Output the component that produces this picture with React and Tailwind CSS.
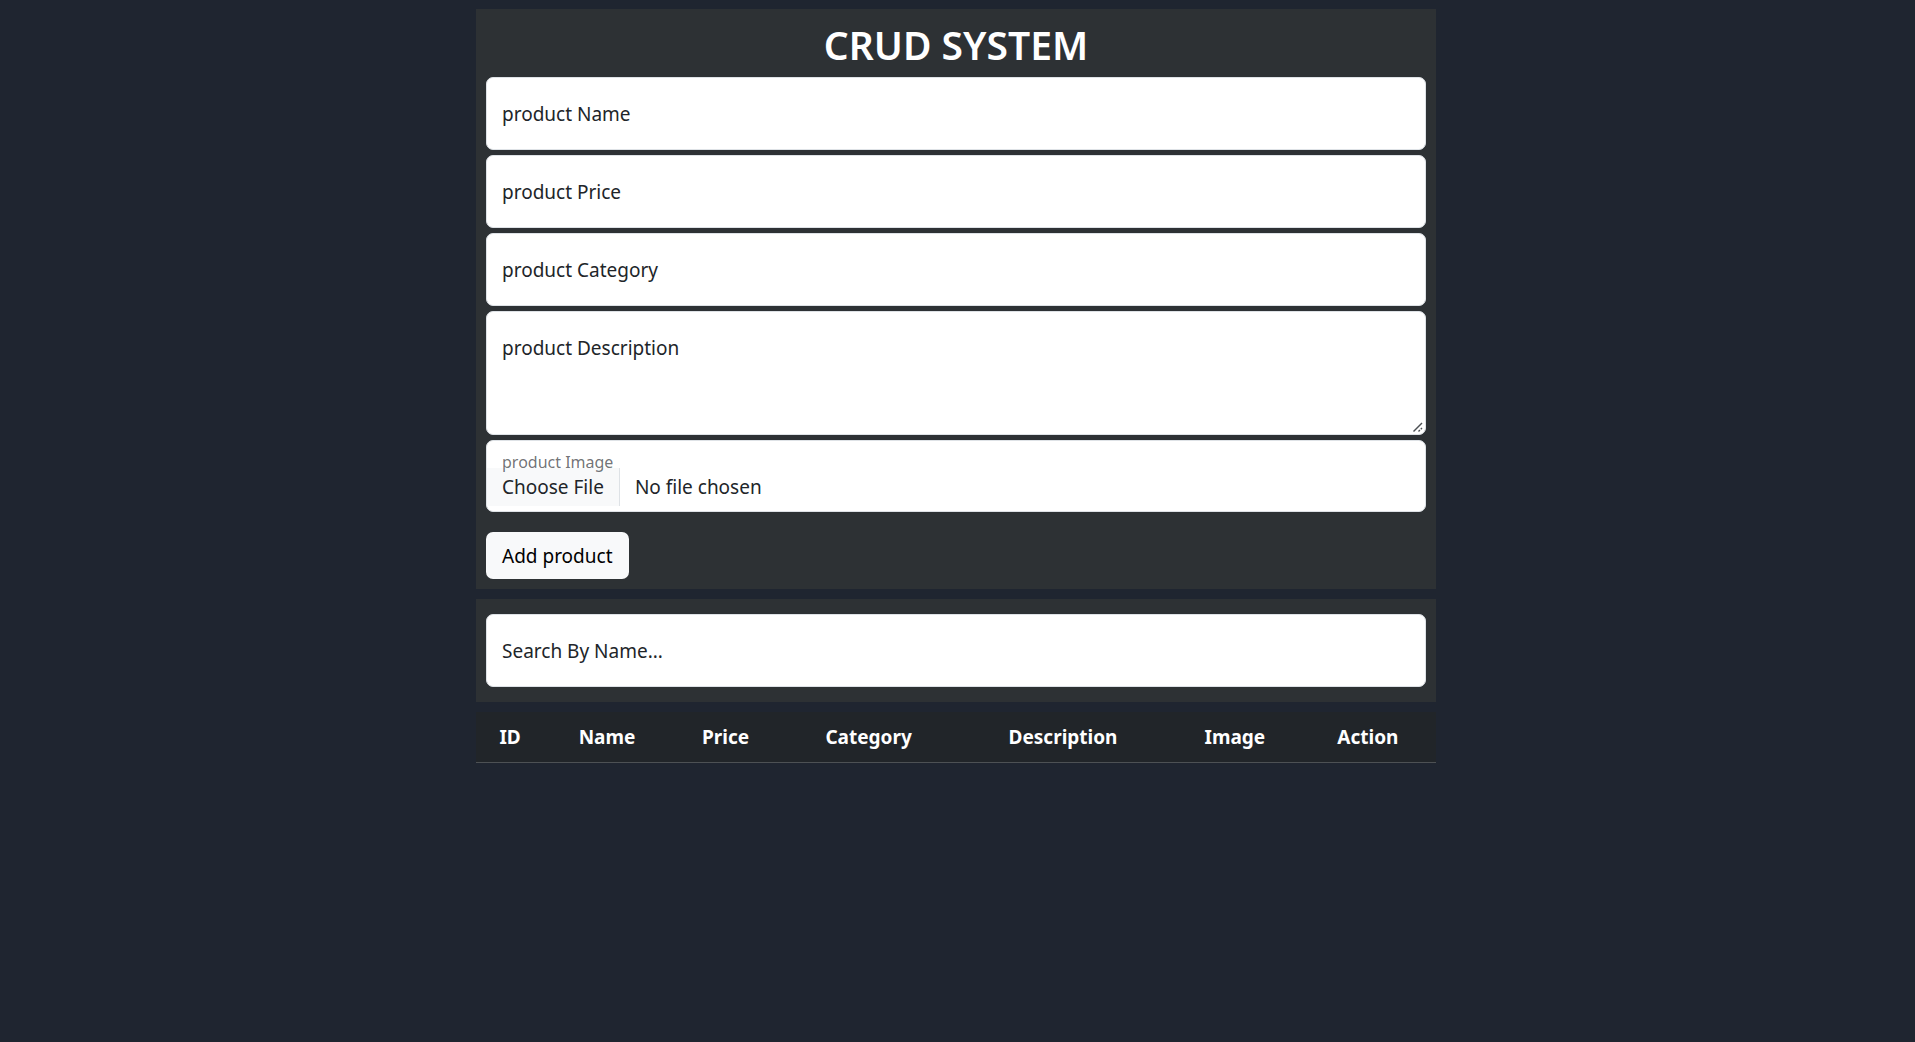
const FIELD =
  "peer block w-full rounded-[7px] border border-[#dee2e6] bg-white px-[15px] text-[19px] leading-[30px] text-[#212529] outline-none focus:border-[#86b7fe]";

const FLOATING_LABEL =
  "pointer-events-none absolute left-4 top-[22px] text-[19px] leading-[30px] text-[#212529] peer-focus:hidden peer-[:not(:placeholder-shown)]:hidden";

const COLUMNS = [
  { title: "ID", width: "w-[7.1%]" },
  { title: "Name", width: "w-[13.1%]" },
  { title: "Price", width: "w-[11.6%]" },
  { title: "Category", width: "w-[18.2%]" },
  { title: "Description", width: "w-[22.3%]" },
  { title: "Image", width: "w-[13.5%]" },
  { title: "Action", width: "w-[14.2%]" },
];

function TextField({ id, label, type = "text" }) {
  return (
    <div className="relative">
      <input id={id} type={type} placeholder=" " className={`${FIELD} h-[73px]`} />
      <label htmlFor={id} className={FLOATING_LABEL}>
        {label}
      </label>
    </div>
  );
}

function ResizeGrip() {
  return (
    <svg
      className="pointer-events-none absolute bottom-[2px] right-[2px] h-3 w-3"
      viewBox="0 0 12 12"
      fill="none"
      stroke="#4b4f52"
      strokeWidth="1.4"
      aria-hidden="true"
    >
      <path d="M1.5 10.5 L10 2" />
      <path d="M6.5 10.5 L10 7" strokeDasharray="2 1.2" />
    </svg>
  );
}

function ProductForm() {
  return (
    <form className="bg-[#2d3134] p-[10px]" onSubmit={(e) => e.preventDefault()}>
      <h1 className="pb-2 pt-[2px] text-center text-[39px] font-semibold leading-[48px] text-white">
        CRUD SYSTEM
      </h1>
      <div className="flex flex-col gap-[5px]">
        <TextField id="name" label="product Name" />
        <TextField id="price" label="product Price" />
        <TextField id="category" label="product Category" />
        <div className="relative">
          <textarea
            id="description"
            placeholder=" "
            className={`${FIELD} h-[124px] resize-y pt-[21px] [&::-webkit-resizer]:bg-transparent`}
          />
          <label htmlFor="description" className={FLOATING_LABEL}>
            product Description
          </label>
          <ResizeGrip />
        </div>
        <div className="relative">
          <input
            id="image"
            type="file"
            className={`${FIELD} h-[72px] overflow-hidden pt-[31px] file:-my-1 file:-ml-[15px] file:mr-[15px] file:h-[38px] file:border-r file:border-solid file:border-[#dee2e6] file:bg-[#f8f9fa] file:px-[15px] file:text-[19px] file:text-[#212529]`}
          />
          <label
            htmlFor="image"
            className="absolute left-4 top-[11px] text-[16px] leading-[22px] text-[#212529]/65"
          >
            product Image
          </label>
        </div>
      </div>
      <button
        type="submit"
        className="mt-5 block h-[47px] rounded-[7px] bg-[#f8f9fa] px-4 text-[19px] leading-[30px] text-black"
      >
        Add product
      </button>
    </form>
  );
}

export default function App() {
  return (
    <main className="min-h-screen bg-[#1f2530] pr-[3px] pt-[9px] font-['Noto_Sans','Open_Sans',sans-serif]">
      <div className="mx-auto w-full max-w-[960px]">
        <ProductForm />
        <section className="mt-[10px] bg-[#2d3134] px-[10px] py-[15px]">
          <TextField id="search" label="Search By Name..." type="search" />
        </section>
        <table className="mt-[10px] w-full table-fixed border-collapse bg-[#212529] text-center text-[19px] leading-[30px] text-white">
          <thead>
            <tr className="border-b border-[#4d5154]">
              {COLUMNS.map(({ title, width }) => (
                <th key={title} scope="col" className={`${width} py-[10px] font-bold`}>
                  {title}
                </th>
              ))}
            </tr>
          </thead>
          <tbody />
        </table>
      </div>
    </main>
  );
}
